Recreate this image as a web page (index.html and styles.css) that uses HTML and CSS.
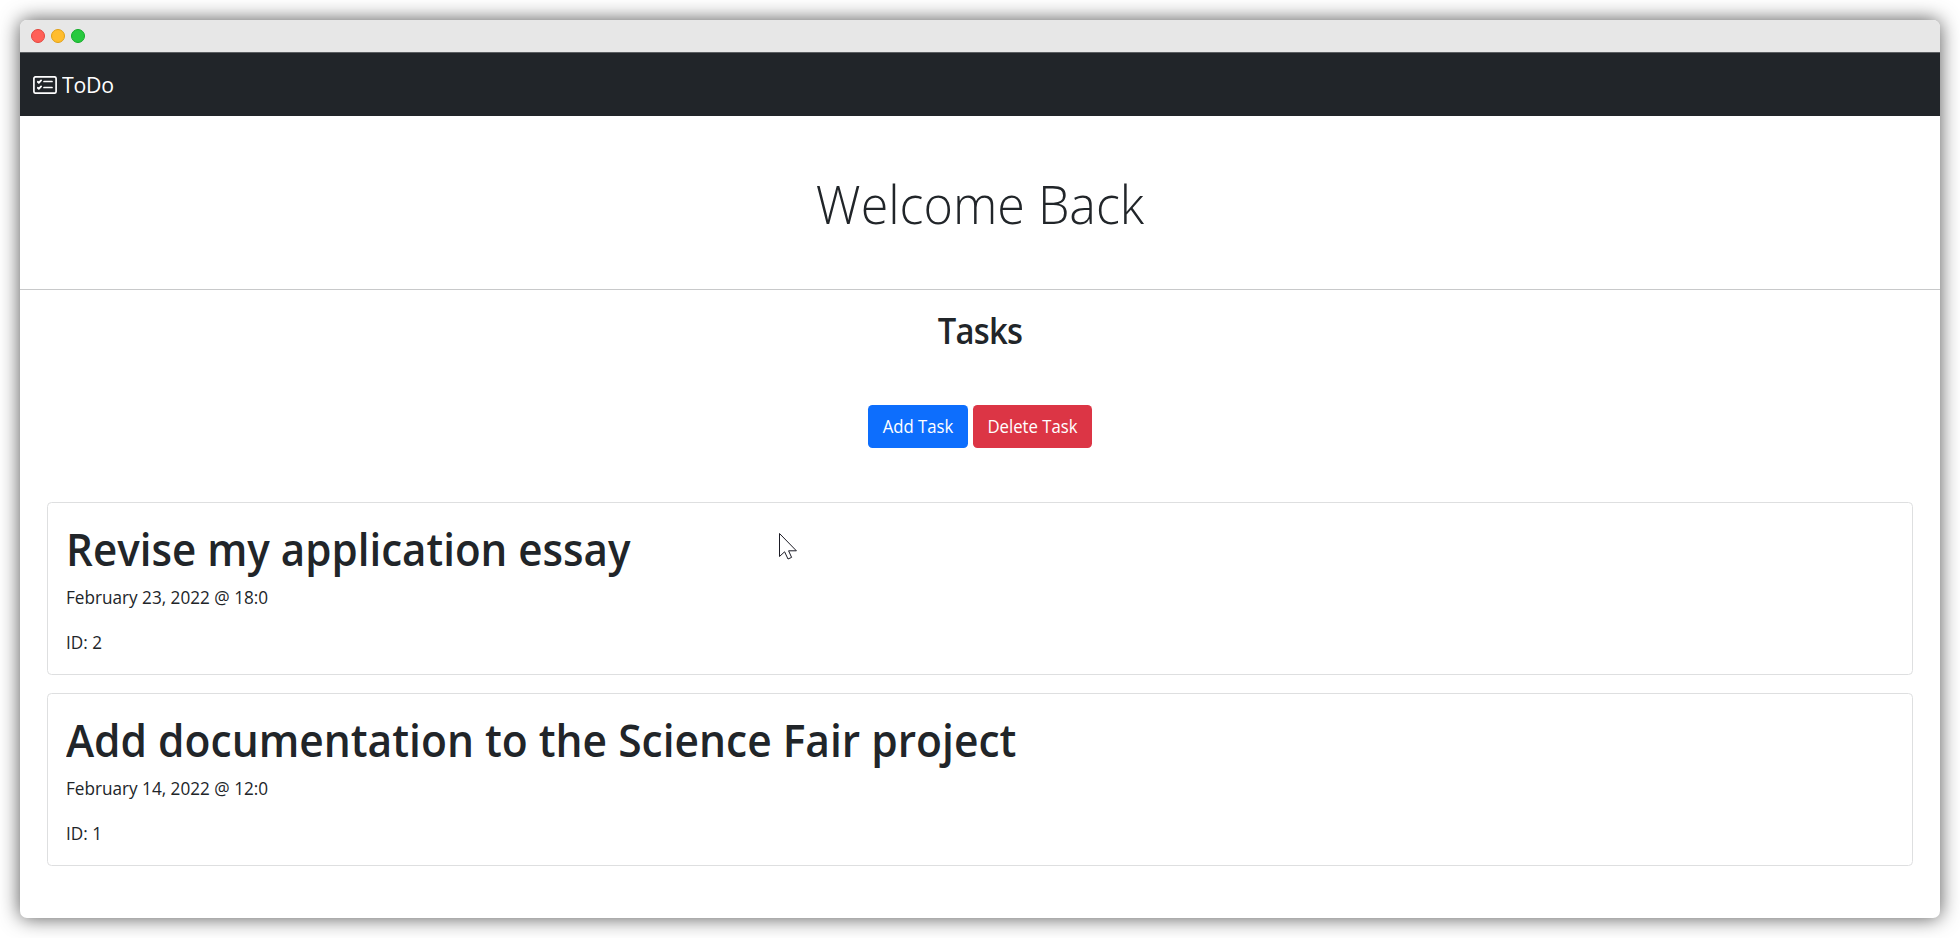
FILE: index.html
```html
<!DOCTYPE html>
<html lang="en">
<head>
<meta charset="utf-8">
<title>ToDo</title>
<link rel="stylesheet" href="styles.css">
</head>
<body>
<div class="window">
  <div class="titlebar">
    <span class="dot dot-close"></span>
    <span class="dot dot-min"></span>
    <span class="dot dot-max"></span>
  </div>
  <nav class="navbar">
    <svg class="brand-icon" viewBox="0 0 24 18" fill="none" stroke="#fff" stroke-linecap="round" stroke-linejoin="round">
      <rect x="0.9" y="0.8" width="22.2" height="16.4" rx="1.8" stroke-width="1.7"/>
      <path d="M11 5.5h8M11 11.5h8" stroke-width="1.7"/>
      <path d="M4.8 5.8l1 1 2.3-2.4M4.8 11.8l1 1 2.3-2.4" stroke-width="1.8"/>
    </svg>
    <span class="brand">ToDo</span>
  </nav>
  <header class="hero"><h1 class="hero-title">Welcome Back</h1></header>
  <main class="content">
    <h2 class="section-title">Tasks</h2>
    <div class="actions">
      <button class="btn btn-add"><span class="btn-label">Add Task</span></button>
      <button class="btn btn-delete"><span class="btn-label">Delete Task</span></button>
    </div>
    <div class="cards">
      <article class="card">
        <h1 class="card-title card-title-tight">Revise my application essay</h1>
        <p class="card-text">February 23, 2022 @ 18:0</p>
        <p class="card-text">ID: 2</p>
      </article>
      <article class="card">
        <h1 class="card-title">Add documentation to the Science Fair project</h1>
        <p class="card-text">February 14, 2022 @ 12:0</p>
        <p class="card-text">ID: 1</p>
      </article>
    </div>
  </main>
</div>
<svg class="cursor" viewBox="0 0 20 28"><path d="M1.5 1.5V24.5L6.6 19.8L10 27L13.6 25.4L10.6 18.8H18.4Z" fill="#fff" stroke="#1b1b25" stroke-width="1"/></svg>
</body>
</html>
```
FILE: styles.css
```css
* { box-sizing: border-box; }
body {
  margin: 0;
  padding: 20px;
  height: 938px;
  overflow: hidden;
  background: #fff;
  color: #212529;
  font-family: "Open Sans", "Noto Sans", sans-serif;
  font-size: 18px;
  line-height: 27px;
}
h1, h2, p { margin: 0; }
.window {
  height: 898px;
  border-radius: 7px;
  background: #fff;
  box-shadow: 0 0 20px rgba(0, 0, 0, 0.68);
  overflow: hidden;
}
.titlebar {
  display: flex;
  align-items: center;
  gap: 6px;
  height: 32px;
  padding-left: 11px;
  background: #e7e7e7;
}
.dot { width: 14px; height: 14px; border-radius: 50%; border: 1px solid; }
.dot-close { background: #ff5f57; border-color: #e2463f; }
.dot-min { background: #ffbd2e; border-color: #e1a116; }
.dot-max { background: #28c93f; border-color: #12ac28; }
.navbar {
  display: flex;
  align-items: center;
  gap: 5px;
  height: 64px;
  padding-left: 13px;
  background: #212529;
  border-top: 1px solid #5b5e61;
}
.brand-icon { width: 24px; height: 18px; }
.brand { color: #fff; font-size: 22.5px; letter-spacing: -0.2px; transform: scaleX(0.945); transform-origin: left; }
.hero {
  height: 174px;
  padding-top: 55px;
  border-bottom: 1px solid #c8c9ca;
  text-align: center;
}
.hero-title { font-size: 54px; line-height: 65px; font-weight: 300; transform: scaleX(0.93); }
.content { padding: 19px 27px 0; }
.section-title { font-size: 36px; line-height: 43px; font-weight: 600; text-align: center; letter-spacing: -0.8px; transform: scaleX(0.91); }
.actions { display: flex; justify-content: center; gap: 5px; margin-top: 53px; }
.btn {
  height: 43px;
  border: 0;
  border-radius: 4.5px;
  padding: 0;
  color: #fff;
  font: inherit;
}
.btn-label { display: inline-block; transform: scaleX(0.93); }
.btn-add { width: 100px; background: #0d6efd; }
.btn-delete { width: 119px; background: #dc3545; }
.cards { display: grid; gap: 18px; margin-top: 54px; }
.card { height: 173px; padding: 18px; border: 1px solid #dedfe0; border-radius: 4.5px; }
.card-title {
  padding-top: 1px;
  margin-bottom: 8px;
  font-size: 45px;
  line-height: 54px;
  font-weight: 600;
  white-space: nowrap;
  transform: scaleX(0.945);
  transform-origin: left;
}
.card-title-tight { transform: scaleX(0.936); }
.card-text { margin-bottom: 18px; transform: scaleX(0.953); transform-origin: left; }
.cursor { position: absolute; left: 778px; top: 532px; width: 20px; height: 28px; }
```
